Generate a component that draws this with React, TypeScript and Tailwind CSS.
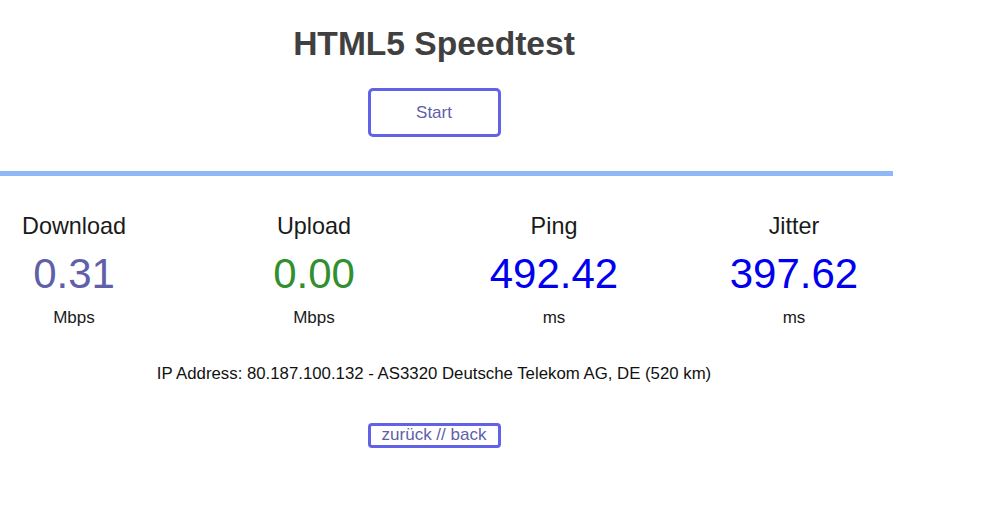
import React from "react";

type Metric = {
  name: string;
  value: string;
  unit: string;
  color: string;
};

const metrics: Metric[] = [
  { name: "Download", value: "0.31", unit: "Mbps", color: "text-[#6060aa]" },
  { name: "Upload", value: "0.00", unit: "Mbps", color: "text-[#309030]" },
  { name: "Ping", value: "492.42", unit: "ms", color: "text-[#0000ee]" },
  { name: "Jitter", value: "397.62", unit: "ms", color: "text-[#0000ee]" },
];

const TestArea: React.FC<{ metric: Metric }> = ({ metric }) => (
  <div className="flex flex-col items-center text-center">
    <div className="text-[23.4px] leading-none text-[#1a1a1a]">{metric.name}</div>
    <div className={`mt-[15px] text-[42px] leading-none ${metric.color}`}>
      {metric.value}
    </div>
    <div className="mt-[14px] text-[17px] leading-none text-[#1a1a1a]">
      {metric.unit}
    </div>
  </div>
);

export default function App() {
  return (
    <div
      className="min-h-[530px] w-full bg-white"
      style={{ fontFamily: '"Liberation Sans", Arial, sans-serif' }}
    >
      <div className="flex w-[868px] flex-col items-center">
        <h1 className="mt-[27px] text-[33.6px] font-bold leading-none text-[#404040]">
          HTML5 Speedtest
        </h1>
        <button
          type="button"
          className="mt-[27px] flex h-[49px] w-[133px] items-center justify-center rounded-[5px] border-[3px] border-[#6262e8] text-[17px] leading-none text-[#6060aa]"
        >
          Start
        </button>
      </div>

      <div className="mt-[34px] h-[5px] w-[893px] bg-[#8fb8f8]" />

      <div className="mt-[39px] grid w-[868px] grid-cols-[repeat(4,148px)] gap-x-[92px]">
        {metrics.map((m) => (
          <TestArea key={m.name} metric={m} />
        ))}
      </div>

      <div className="flex w-[868px] flex-col items-center">
        <p className="mt-[40px] text-[16.8px] leading-none text-[#111]">
          IP Address: 80.187.100.132 - AS3320 Deutsche Telekom AG, DE (520 km)
        </p>
        <button
          type="button"
          className="mt-[40px] box-border flex h-[25px] w-[133px] justify-center rounded-[4px] border-[3px] border-[#6262e8] text-[17px] leading-[17px] text-[#6060aa]"
        >
          zurück // back
        </button>
      </div>
    </div>
  );
}
